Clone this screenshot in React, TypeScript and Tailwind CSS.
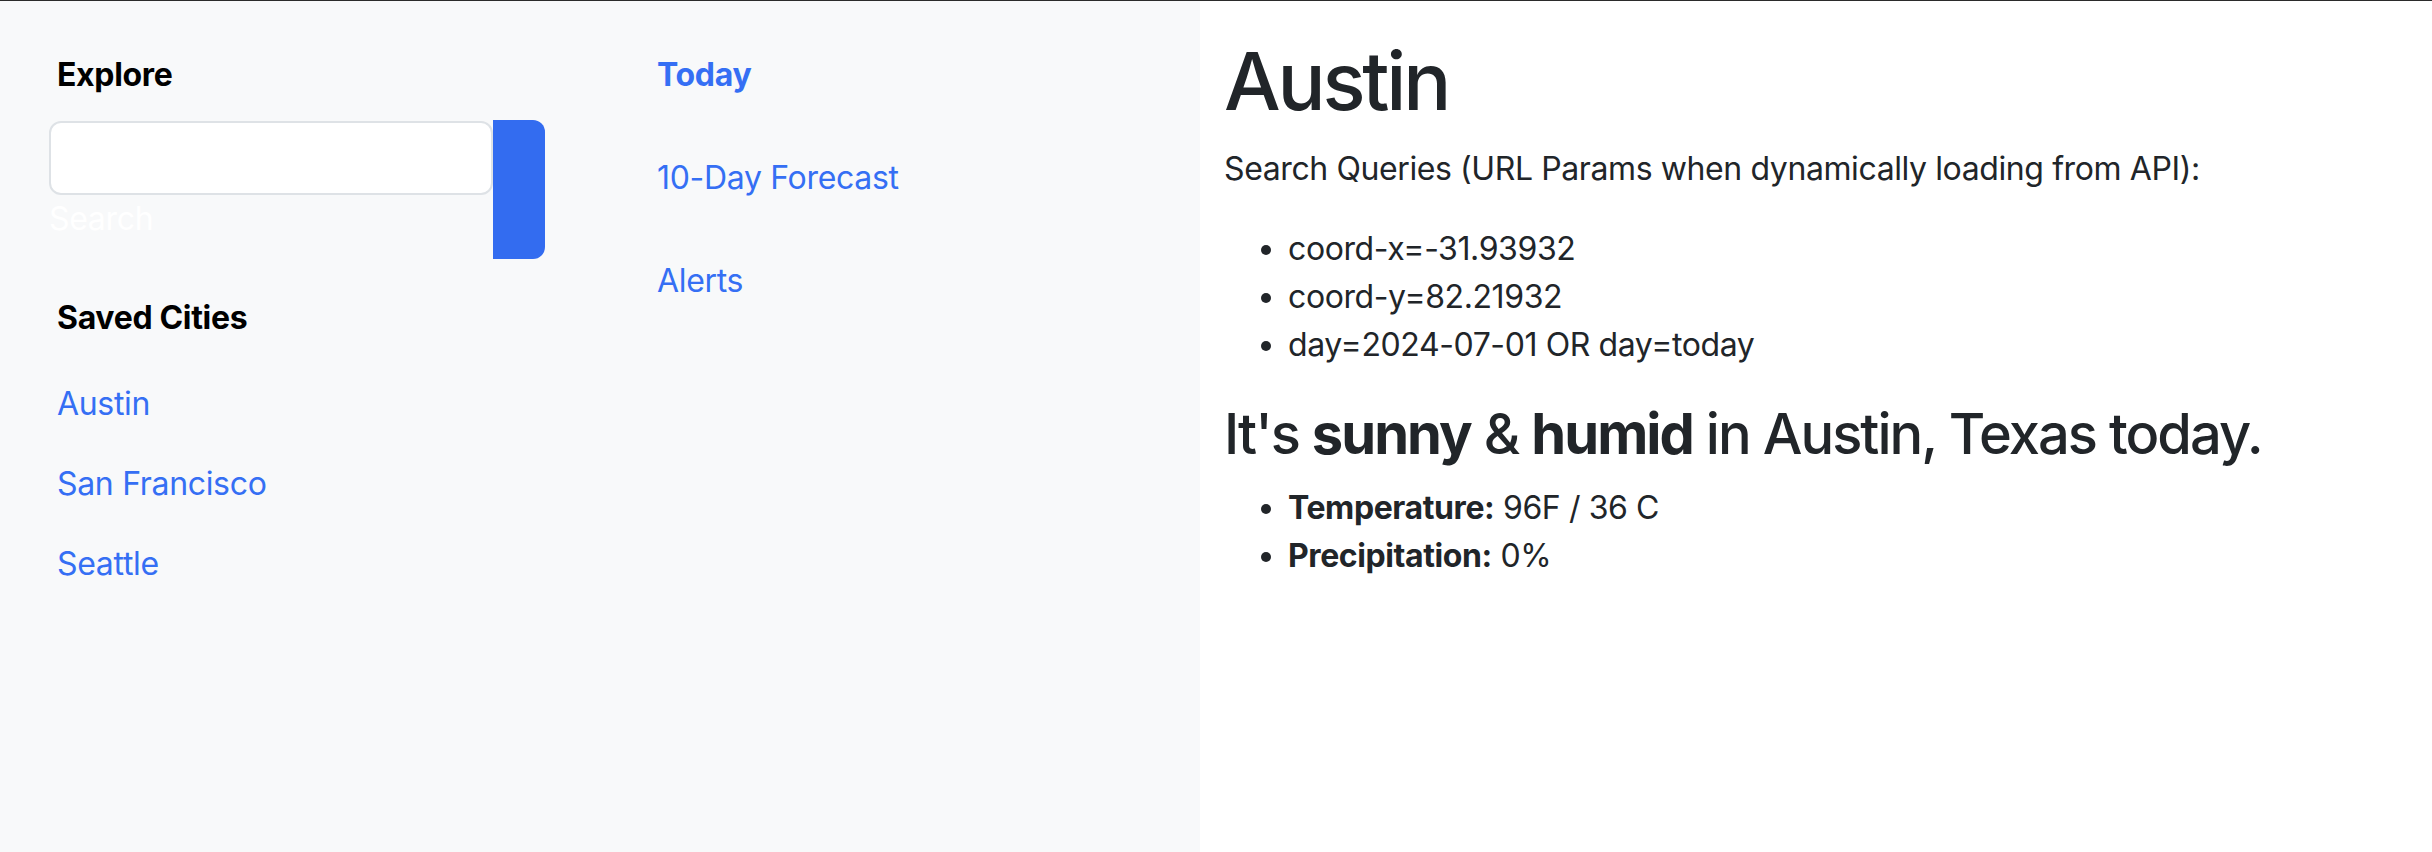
import { clsx } from 'clsx';

const savedCities = ['Austin', 'San Francisco', 'Seattle'];

const views = [
  { label: 'Today', active: true },
  { label: '10-Day Forecast', active: false },
  { label: 'Alerts', active: false },
];

const queryParams = ['coord-x=-31.93932', 'coord-y=82.21932', 'day=2024-07-01 OR day=today'];

export default function App() {
  return (
    <div className="flex min-h-[852px] border-t border-[#2b2b2b] bg-white font-['Inter','Noto_Sans',sans-serif] text-[#212529]">
      {/* Sidebar */}
      <aside className="flex w-[1200px] shrink-0 bg-[#f8f9fa] tracking-[-0.02em]">
        {/* Explore + saved cities */}
        <div className="flex w-[600px] flex-col pl-[49px] pt-[50px]">
          <h2 className="pl-[8px] text-[32px] font-bold leading-[48px] text-black">Explore</h2>

          <form className="mt-[21px] flex items-start" onSubmit={(e) => e.preventDefault()}>
            <div className="flex w-[444px] flex-col">
              <input
                type="text"
                aria-label="Search"
                className="mt-px h-[74px] w-full rounded-[12px] border-2 border-[#dee2e6] bg-white px-[24px] text-[32px] outline-none"
              />
              <span className="text-[32px] leading-[48px] text-white">Search</span>
            </div>
            <button
              type="submit"
              aria-label="Search"
              className="h-[139px] w-[52px] rounded-r-[12px] bg-[#336cf0]"
            />
          </form>

          <h2 className="mt-[35px] pl-[8px] text-[32px] font-bold leading-[48px] text-black">
            Saved Cities
          </h2>
          <ul className="mt-[38px] flex flex-col gap-[32px] pl-[8px]">
            {savedCities.map((city) => (
              <li key={city}>
                <a href="#" className="text-[32px] leading-[48px] text-[#356ff4]">
                  {city}
                </a>
              </li>
            ))}
          </ul>
        </div>

        {/* Views */}
        <nav className="flex w-[600px] flex-col gap-[55px] pl-[57px] pt-[50px]">
          {views.map((view) => (
            <a
              key={view.label}
              href="#"
              className={clsx(
                'text-[32px] leading-[48px] text-[#356ff4]',
                view.active && 'font-bold'
              )}
            >
              {view.label}
            </a>
          ))}
        </nav>
      </aside>

      {/* Main content */}
      <main className="flex-1 pl-[24px] pt-[32px] tracking-[-0.025em]">
        <h1 className="mb-[16px] text-[80px] font-medium leading-[96px] tracking-[-0.04em]">Austin</h1>
        <p className="mb-[32px] text-[32px] leading-[48px]">
          Search Queries (URL Params when dynamically loading from API):
        </p>
        <ul className="mb-[32px] list-disc pl-[64px] text-[32px] leading-[48px]">
          {queryParams.map((q) => (
            <li key={q}>{q}</li>
          ))}
        </ul>

        <h3 className="mb-[16px] text-[56px] font-medium leading-[67px] tracking-[-0.035em]">
          It's <strong className="font-bold">sunny</strong> &amp;{' '}
          <strong className="font-bold">humid</strong> in Austin, Texas today.
        </h3>
        <ul className="list-disc pl-[64px] text-[32px] leading-[48px]">
          <li>
            <strong className="font-bold">Temperature:</strong> 96F / 36 C
          </li>
          <li>
            <strong className="font-bold">Precipitation:</strong> 0%
          </li>
        </ul>
      </main>
    </div>
  );
}
